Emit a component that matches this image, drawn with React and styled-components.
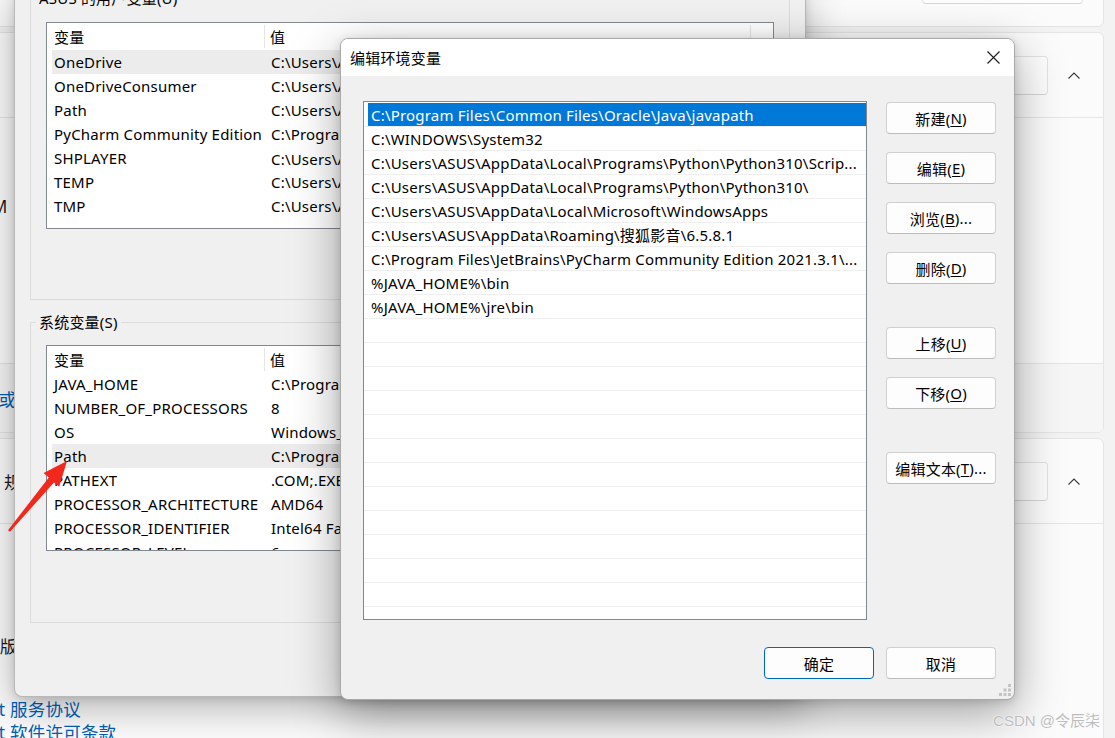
import React from "react";
import styled, { createGlobalStyle } from "styled-components";

const UI = `"Noto Sans", "Noto Sans CJK SC", sans-serif`;

const GlobalStyle = createGlobalStyle`
  html, body { margin: 0; padding: 0; }
  body {
    width: 1115px; height: 738px; overflow: hidden;
    background: #f3f3f3;
    font-family: ${UI};
    color: #000;
  }
  * { box-sizing: border-box; }
`;

const Desktop = styled.div`
  position: relative;
  width: 1115px;
  height: 738px;
  overflow: hidden;
  background: #f3f3f3;
  letter-spacing: 0.2px;
`;

/* ---------- Settings app (background) ---------- */
const SettingsPage = styled.div`
  display: flex;
  flex-direction: column;
  gap: 5px;
  width: 1204px;
  margin-left: -100px;
  margin-top: -60px;
`;

const Card = styled.div`
  flex: none;
  background: #fbfbfb;
  border: 1px solid #e5e5e5;
  border-radius: 6px;
  display: flex;
  flex-direction: column;
  overflow: hidden;
  height: ${(p) => (p.$h ? `${p.$h}px` : "auto")};
`;

const CardHeader = styled.div`
  flex: none;
  height: ${(p) => p.$h || 84}px;
  display: flex;
  align-items: ${(p) => p.$align || "center"};
  padding: ${(p) => p.$pad || "0 23px 0 22px"};
`;

const CardTitle = styled.div`
  flex: 1;
  font-size: 17.5px;
  color: #1b1b1b;
  white-space: nowrap;
`;

const SetButton = styled.div`
  flex: none;
  width: ${(p) => p.$w}px;
  height: ${(p) => p.$h}px;
  margin-right: ${(p) => p.$mr || 0}px;
  background: #fdfdfd;
  border: 1px solid #e3e3e3;
  border-bottom-color: #d6d6d6;
  border-radius: 4px;
  display: flex;
  align-items: center;
  justify-content: center;
  font-size: 15px;
  color: #1b1b1b;
`;

const CardBody = styled.div`
  flex: none;
  height: ${(p) => p.$h}px;
  border-top: 1px solid #e5e5e5;
  padding: ${(p) => p.$pt}px ${(p) => p.$pl || 28}px 0;
  background: ${(p) => p.$bg || "#fbfbfb"};
  display: flex;
  flex-direction: ${(p) => (p.$row ? "row" : "column")};
  align-items: ${(p) => (p.$row ? "center" : "stretch")};
  gap: ${(p) => p.$gap || 0}px;
  font-size: 17.5px;
  color: #1b1b1b;
  white-space: nowrap;
`;

const SpecRow = styled.div`
  display: flex;
  height: 32px;
  align-items: center;
  font-size: 17.5px;
  color: #1b1b1b;
  white-space: nowrap;
`;

const SpecLabel = styled.span`
  flex: none;
  width: 220px;
`;

const LinkText = styled.span`
  color: #005fb8;
  font-size: 17.5px;
  line-height: ${(p) => p.$lh || "normal"};
  display: ${(p) => (p.$block ? "block" : "inline")};
`;

const LinkList = styled.div`
  margin: 5px 0 0 -3px;
  display: flex;
  flex-direction: column;
`;

const Chevron = () => (
  <svg width="12" height="7" viewBox="0 0 12 7" style={{ flex: "none" }}>
    <polyline points="0.5,6.5 6,1 11.5,6.5" fill="none" stroke="#3b3b3b" strokeWidth="1.1" />
  </svg>
);

/* ---------- Environment variables window (back) ---------- */
const EnvWindow = styled.div`
  position: absolute;
  left: 14px;
  top: -10px;
  width: 792px;
  height: 707px;
  background: #f0f0f0;
  border: 1px solid #b9b9b9;
  border-top: none;
  border-radius: 0 0 8px 8px;
  box-shadow: 0 10px 40px rgba(0, 0, 0, 0.3), 0 2px 8px rgba(0, 0, 0, 0.12);
  padding: 0 15px;
  display: flex;
  flex-direction: column;
  font-size: 15px;
`;

const GroupBox = styled.div`
  flex: none;
  height: ${(p) => p.$h}px;
  margin-top: ${(p) => p.$mt}px;
  border: 1px solid #dcdcdc;
  padding: 0 15px;
  display: flex;
  flex-direction: column;
`;

const GroupLabel = styled.div`
  width: fit-content;
  height: 20px;
  line-height: 20px;
  margin: -11px 0 0 -10px;
  padding: 0 3px;
  background: #f0f0f0;
  font-size: 15px;
  white-space: nowrap;
`;

const VarList = styled.div`
  flex: none;
  margin-top: ${(p) => p.$mt}px;
  height: ${(p) => p.$h}px;
  background: #fff;
  border: 1px solid #828790;
  overflow: hidden;
`;

const VarGrid = styled.div`
  display: grid;
  grid-template-columns: 218px 486px 1fr;
  align-items: center;
  height: ${(p) => p.$h}px;
  white-space: nowrap;
`;

const HeadCell = styled.div`
  display: flex;
  align-items: center;
  padding-left: ${(p) => p.$pl}px;
  border-right: ${(p) => (p.$div ? "1px solid #e5e5e5" : "none")};
  height: 23px;
  overflow: hidden;
`;

const VarRow = styled.div`
  display: grid;
  grid-template-columns: 213px 486px 1fr;
  height: 24px;
  margin-left: 5px;
  align-items: center;
  white-space: nowrap;
  background: ${(p) => (p.$hl ? "#ececec" : "transparent")};
`;

const VarCell = styled.div`
  padding-left: ${(p) => p.$pl}px;
  overflow: hidden;
`;

/* ---------- Edit environment variable dialog ---------- */
const EditWindow = styled.div`
  position: absolute;
  left: 340px;
  top: 38px;
  width: 675px;
  height: 662px;
  background: #f0f0f0;
  border: 1px solid #a9a9a9;
  border-radius: 8px;
  overflow: hidden;
  box-shadow: 0 14px 48px rgba(0, 0, 0, 0.36), 0 2px 10px rgba(0, 0, 0, 0.14);
  display: flex;
  flex-direction: column;
  font-size: 15px;
`;

const TitleBar = styled.div`
  flex: none;
  height: 37px;
  background: #fff;
  display: flex;
  align-items: center;
  justify-content: space-between;
  padding-left: 9px;
`;

const TitleText = styled.div`
  font-size: 15px;
  color: #000;
  padding-bottom: 1px;
`;

const CloseButton = styled.div`
  width: 42px;
  height: 37px;
  display: flex;
  align-items: center;
  justify-content: center;
`;

const DialogBody = styled.div`
  flex: 1;
  padding: 25px 18px 0 22px;
  display: flex;
  flex-direction: column;
  position: relative;
`;

const MainRow = styled.div`
  display: flex;
  gap: 19px;
`;

const PathList = styled.div`
  flex: none;
  width: 504px;
  height: 519px;
  padding-top: 1px;
  background: #fff;
  border: 1px solid #828790;
  overflow: hidden;
`;

const PathRow = styled.div`
  height: 24px;
  border-bottom: 1px solid #efefef;
  display: flex;
`;

const PathCell = styled.div`
  flex: 1;
  height: 23px;
  margin-left: 4px;
  padding: 1px 0 0 3px;
  line-height: 22px;
  white-space: nowrap;
  overflow: hidden;
  color: ${(p) => (p.$sel ? "#fff" : "#000")};
  background: ${(p) => (p.$sel ? "#0078d7" : "transparent")};
`;

const ButtonColumn = styled.div`
  display: flex;
  flex-direction: column;
  padding-top: 1px;
`;

const DlgButton = styled.div`
  flex: none;
  width: 110px;
  height: 32px;
  margin-top: ${(p) => p.$mt || 0}px;
  background: #fdfdfd;
  border: 1px solid ${(p) => (p.$primary ? "#0067c0" : "#d0d0d0")};
  border-bottom-color: ${(p) => (p.$primary ? "#0067c0" : "#bcbcbc")};
  border-radius: 4px;
  display: flex;
  align-items: center;
  justify-content: center;
  font-size: 15px;
  color: #000;
  white-space: nowrap;
`;

const Key = styled.span`
  text-decoration: underline;
  text-underline-offset: 2px;
`;

const Footer = styled.div`
  display: flex;
  justify-content: flex-end;
  gap: 12px;
  margin-top: 27px;
`;

const Grip = styled.svg`
  position: absolute;
  right: 2px;
  bottom: 2px;
`;

const ArrowMark = styled.svg`
  position: absolute;
  left: 0;
  top: 455px;
`;

const Watermark = styled.div`
  position: absolute;
  right: 15px;
  bottom: 8px;
  font-family: "Liberation Sans", "Noto Sans CJK SC", sans-serif;
  font-size: 15px;
  letter-spacing: 0;
  color: #bdbdbd;
  text-shadow: 0 0 2px #fff, 0 0 1px #fff;
`;

/* ---------- data ---------- */
const userVars = [
  ["OneDrive", "C:\\Users\\ASUS\\OneDrive", true],
  ["OneDriveConsumer", "C:\\Users\\ASUS\\OneDrive"],
  ["Path", "C:\\Users\\ASUS\\AppData\\Local\\Microsoft\\WindowsApps;"],
  ["PyCharm Community Edition", "C:\\Program Files\\JetBrains\\PyCharm Community Edition 2021.3.1\\bin;"],
  ["SHPLAYER", "C:\\Users\\ASUS\\AppData\\Roaming\\搜狐影音\\6.5.8.1"],
  ["TEMP", "C:\\Users\\ASUS\\AppData\\Local\\Temp"],
  ["TMP", "C:\\Users\\ASUS\\AppData\\Local\\Temp"],
];

const sysVars = [
  ["JAVA_HOME", "C:\\Program Files\\Java\\jdk1.8.0_311"],
  ["NUMBER_OF_PROCESSORS", "8"],
  ["OS", "Windows_NT"],
  ["Path", "C:\\Program Files\\Common Files\\Oracle\\Java\\javapath;C:\\WINDOWS\\system32", true],
  ["PATHEXT", ".COM;.EXE;.BAT;.CMD;.VBS;.VBE;.JS;.JSE;.WSF;.WSH;.MSC;.PY;.PYW"],
  ["PROCESSOR_ARCHITECTURE", "AMD64"],
  ["PROCESSOR_IDENTIFIER", "Intel64 Family 6 Model 140 Stepping 1, GenuineIntel"],
  ["PROCESSOR_LEVEL", "6"],
];

const paths = [
  "C:\\Program Files\\Common Files\\Oracle\\Java\\javapath",
  "C:\\WINDOWS\\System32",
  "C:\\Users\\ASUS\\AppData\\Local\\Programs\\Python\\Python310\\Scrip...",
  "C:\\Users\\ASUS\\AppData\\Local\\Programs\\Python\\Python310\\",
  "C:\\Users\\ASUS\\AppData\\Local\\Microsoft\\WindowsApps",
  "C:\\Users\\ASUS\\AppData\\Roaming\\搜狐影音\\6.5.8.1",
  "C:\\Program Files\\JetBrains\\PyCharm Community Edition 2021.3.1\\...",
  "%JAVA_HOME%\\bin",
  "%JAVA_HOME%\\jre\\bin",
];

const specRowsB = [
  ["设备名称", "LAPTOP-ASUS"],
  ["处理器", "11th Gen Intel(R) Core(TM) i5-11300H @ 3.10GHz"],
  ["机带 RAM", "16.0 GB (15.8 GB 可用)"],
  ["设备 ID", "A1B2C3D4-0000-0000-0000-000000000000"],
  ["产品 ID", "00342-30000-00000-AAOEM"],
  ["系统类型", "64 位操作系统, 基于 x64 的处理器"],
  ["笔和触控", "没有可用于此显示器的笔或触控输入"],
];

const specRowsC = [
  ["版本", "Windows 11 家庭中文版"],
  ["版本", "21H2"],
  ["安装日期", "2021/12/20"],
  ["操作系统版本", "22000.376"],
  ["体验", "Windows 功能体验包 1000.22000.376.0"],
];

function VarTable({ rows, mt, h, hh }) {
  return (
    <VarList $mt={mt} $h={h}>
      <VarGrid $h={hh}>
        <HeadCell $pl={7} $div>变量</HeadCell>
        <HeadCell $pl={5} $div>值</HeadCell>
        <HeadCell $pl={5} />
      </VarGrid>
      {rows.map(([n, v, hl], i) => (
        <VarRow key={i} $hl={hl}>
          <VarCell $pl={2}>{n}</VarCell>
          <VarCell $pl={6}>{v}</VarCell>
          <VarCell $pl={0} />
        </VarRow>
      ))}
    </VarList>
  );
}

const buttons = [
  ["新建(", "N", ")", 0],
  ["编辑(", "E", ")", 18],
  ["浏览(", "B", ")...", 18],
  ["删除(", "D", ")", 18],
  ["上移(", "U", ")", 43],
  ["下移(", "O", ")", 18],
  ["编辑文本(", "T", ")...", 43],
];

export default function App() {
  const rows = [...paths, ...Array(13).fill("")];
  return (
    <>
      <GlobalStyle />
      <Desktop>
        <SettingsPage>
          <Card $h={87}>
            <CardHeader $h={85} $align="flex-end" $pad="0 20px 22px 28px">
              <CardTitle>LAPTOP-ASUS</CardTitle>
              <SetButton $w={161} $h={32}>重命名这台电脑</SetButton>
            </CardHeader>
          </Card>

          <Card>
            <CardHeader>
              <CardTitle>设备规格</CardTitle>
              <SetButton $w={128} $h={39} $mr={20}>复制</SetButton>
              <Chevron />
            </CardHeader>
            <CardBody $h={246} $pt={7}>
              {specRowsB.map(([l, v], i) => (
                <SpecRow key={i}>
                  <SpecLabel>{l}</SpecLabel>
                  <span>{v}</span>
                </SpecRow>
              ))}
            </CardBody>
            <CardBody $h={69} $pt={0} $pl={4} $row $gap={5} $bg="#f6f6f6">
              <span>相关链接</span>
              <LinkText>域或工作组</LinkText>
              <LinkText>系统保护</LinkText>
              <LinkText>高级系统设置</LinkText>
            </CardBody>
          </Card>

          <Card>
            <CardHeader>
              <CardTitle>Windows 规格</CardTitle>
              <SetButton $w={128} $h={39} $mr={20}>复制</SetButton>
              <Chevron />
            </CardHeader>
            <CardBody $h={260} $pt={9}>
              {specRowsC.map(([l, v], i) => (
                <SpecRow key={i}>
                  <SpecLabel>{l}</SpecLabel>
                  <span>{v}</span>
                </SpecRow>
              ))}
              <LinkList>
                <LinkText $block $lh="23px">Microsoft 服务协议</LinkText>
                <LinkText $block $lh="23px">Microsoft 软件许可条款</LinkText>
              </LinkList>
            </CardBody>
          </Card>
        </SettingsPage>

        <EnvWindow>
          <GroupBox $h={302} $mt={8}>
            <GroupLabel>ASUS 的用户变量(U)</GroupLabel>
            <VarTable rows={userVars} mt={14} h={207} hh={27} />
          </GroupBox>
          <GroupBox $h={301} $mt={22}>
            <GroupLabel>系统变量(S)</GroupLabel>
            <VarTable rows={sysVars} mt={13} h={206} hh={26} />
          </GroupBox>
        </EnvWindow>

        <EditWindow>
          <TitleBar>
            <TitleText>编辑环境变量</TitleText>
            <CloseButton>
              <svg width="13" height="13" viewBox="0 0 13 13">
                <path d="M0.5 0.5 L12.5 12.5 M12.5 0.5 L0.5 12.5" stroke="#1a1a1a" strokeWidth="1.1" fill="none" />
              </svg>
            </CloseButton>
          </TitleBar>
          <DialogBody>
            <MainRow>
              <PathList>
                {rows.map((t, i) => (
                  <PathRow key={i}>
                    <PathCell $sel={i === 0}>{t}</PathCell>
                  </PathRow>
                ))}
              </PathList>
              <ButtonColumn>
                {buttons.map(([a, k, b, mt], i) => (
                  <DlgButton key={i} $mt={mt}>
                    {a}
                    <Key>{k}</Key>
                    {b}
                  </DlgButton>
                ))}
              </ButtonColumn>
            </MainRow>
            <Footer>
              <DlgButton $primary>确定</DlgButton>
              <DlgButton>取消</DlgButton>
            </Footer>
            <Grip width="13" height="13" viewBox="0 0 13 13">
              {[
                [9, 0], [9, 4.5], [4.5, 4.5], [9, 9], [4.5, 9], [0, 9],
              ].map(([x, y], i) => (
                <rect key={i} x={x} y={y} width="3" height="3" fill="#c4c4c4" />
              ))}
            </Grip>
          </DialogBody>
        </EditWindow>

        <ArrowMark width="80" height="85" viewBox="0 455 80 85">
          <polygon
            points="8.0,530.3 48.8,477.4 43.6,473.0 67,461 59.2,486.8 54.0,482.4 10.0,531.7"
            fill="#f2281c"
          />
        </ArrowMark>

        <Watermark>CSDN @令辰柒</Watermark>
      </Desktop>
    </>
  );
}
